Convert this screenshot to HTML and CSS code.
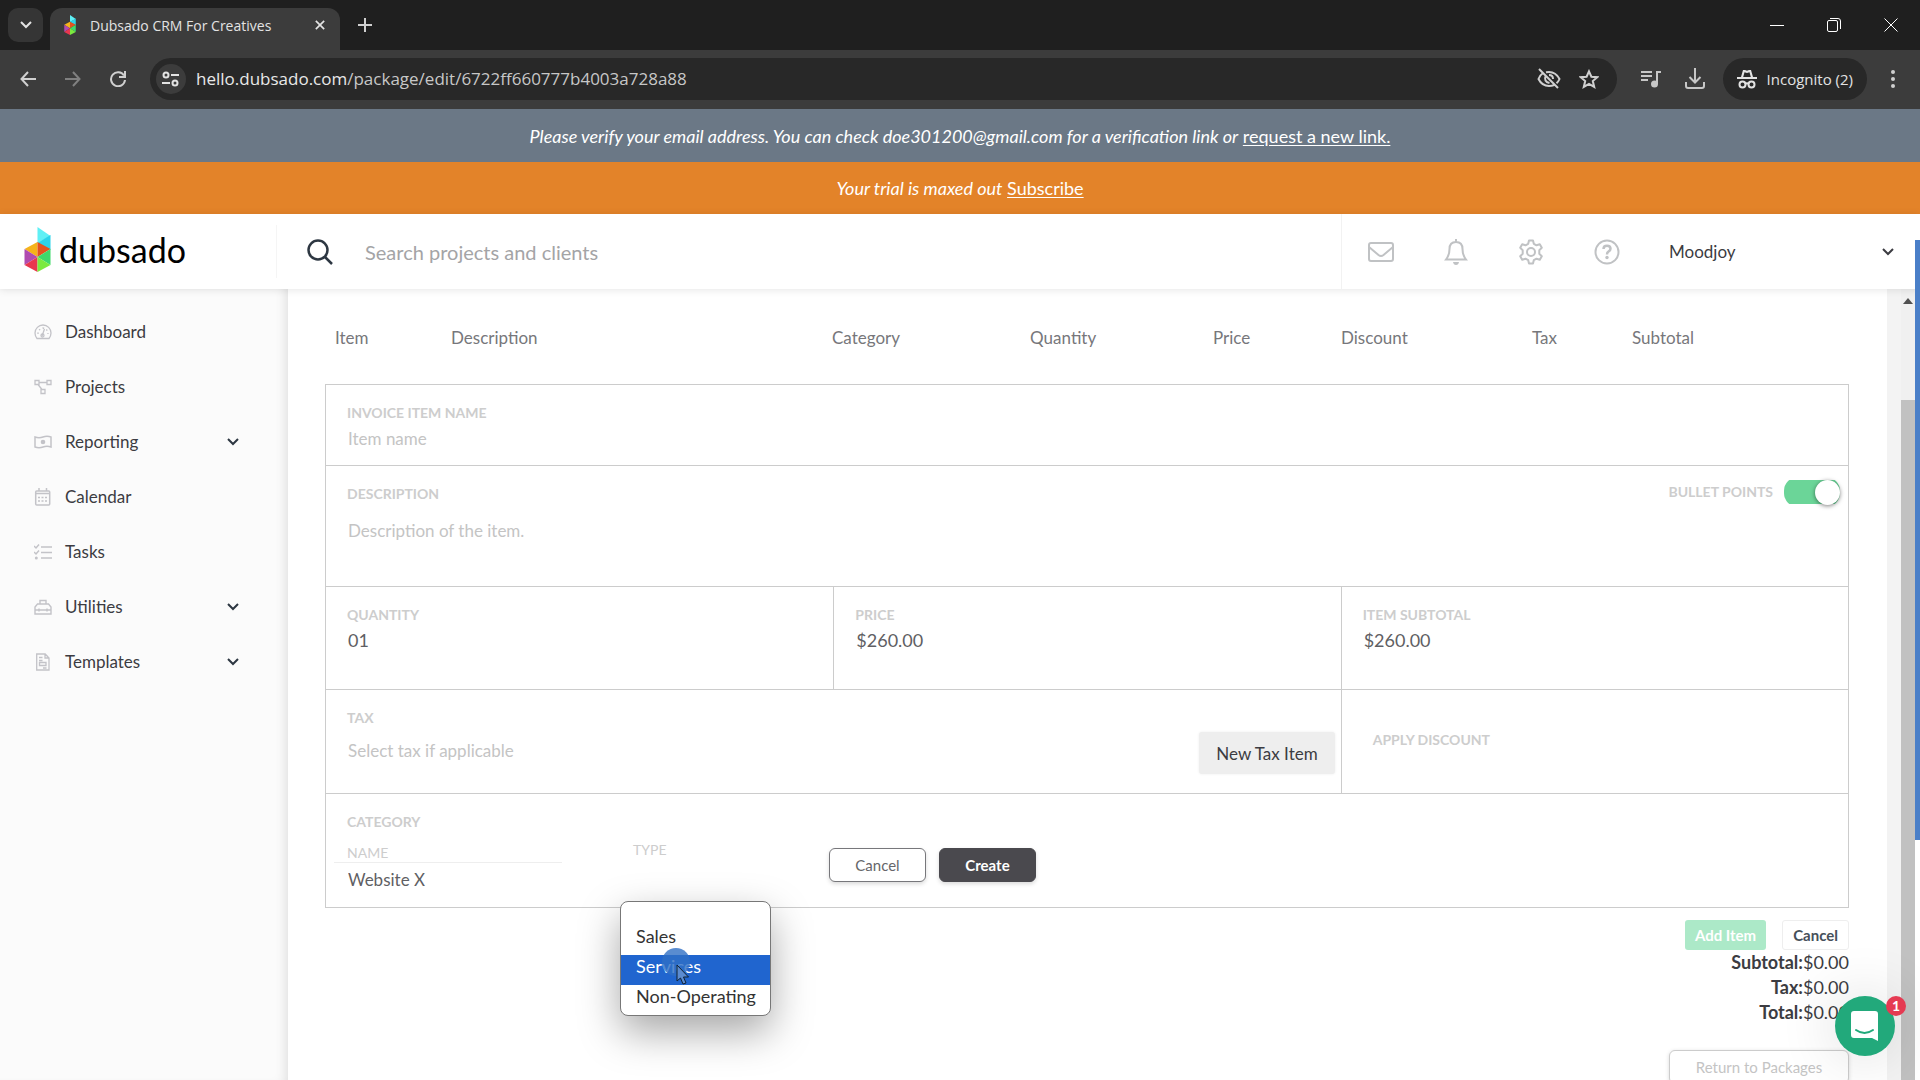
FILE: index.html
```html
<!DOCTYPE html>
<html lang="en">
<head>
<meta charset="utf-8">
<title>Dubsado CRM For Creatives</title>
<link rel="stylesheet" href="styles.css">
</head>
<body>
<svg class="defs" width="0" height="0">
<symbol id="cube" viewBox="0 0 26 45">
<path fill="#5ff0f5" d="M13 0v16l13-7z"/><path fill="#2bd3ea" d="M26 8v15l-13-7z"/>
<path fill="#f5b31b" d="M0 22l13-7v15z"/><path fill="#e4521f" d="M13 15l13 7-13 8z"/>
<path fill="#b04bb0" d="M0 22l13 8-13 8z"/><path fill="#e8374f" d="M0 38l13-8v15z"/>
<path fill="#3ed96a" d="M26 22v16l-13-8z"/><path fill="#7bea3f" d="M13 30l13 8-13 7z"/>
</symbol>
<symbol id="chev" viewBox="0 0 12 12"><path fill="none" stroke="currentColor" stroke-width="2" d="M1 3l5 5 5-5"/></symbol>
</svg>

<div class="tabs">
<button class="tab-search" aria-label="Search tabs"><svg width="12" height="12"><use href="#chev"/></svg></button>
<div class="tab">
<svg width="12" height="20"><use href="#cube"/></svg>
<span class="tab-title">Dubsado CRM For Creatives</span>
<button class="plain" aria-label="Close tab"><svg width="10" height="10" viewBox="0 0 12 12"><path fill="none" stroke="#e3e3e3" stroke-width="2" d="M1 1l10 10M11 1L1 11"/></svg></button>
</div>
<button class="plain new-tab" aria-label="New tab"><svg width="14" height="14" viewBox="0 0 14 14"><path fill="none" stroke="#d0d0d0" stroke-width="2" d="M7 0v14M0 7h14"/></svg></button>
<div class="window-buttons">
<button class="plain" aria-label="Minimize"><svg width="14" height="14" viewBox="0 0 14 14"><path stroke="#fff" d="M0 7.500h14"/></svg></button>
<button class="plain" aria-label="Restore"><svg width="14" height="14" viewBox="0 0 14 14"><rect x=".5" y="2.500" width="10" height="11" rx="1.500" fill="none" stroke="#fff"/><path fill="none" stroke="#fff" d="M3 .5h8q2.500 0 2.500 2.500v8"/></svg></button>
<button class="plain" aria-label="Close"><svg width="14" height="14" viewBox="0 0 14 14"><path stroke="#fff" d="M.5.5l13 13M13.500.5l-13 13"/></svg></button>
</div>
</div>

<div class="toolbar">
<div class="history">
<button class="plain" aria-label="Back"><svg width="16" height="16" viewBox="0 0 16 16"><path fill="none" stroke="#d0d0d0" stroke-width="2" d="M16 8H1.500M8 1L1.500 8 8 15"/></svg></button>
<button class="plain" aria-label="Forward"><svg width="16" height="16" viewBox="0 0 16 16"><path fill="none" stroke="#808080" stroke-width="2" d="M0 8h14.500M8 1l6.500 7L8 15"/></svg></button>
<button class="plain" aria-label="Reload"><svg width="16" height="16" viewBox="0 0 16 16"><path fill="none" stroke="#d0d0d0" stroke-width="2" d="M14 4.500A7 7 0 1 0 15 9M15 0v6H9"/></svg></button>
</div>
<div class="address">
<span class="site-info"><svg width="18" height="16" viewBox="0 0 18 16"><g fill="none" stroke="#e3e3e3" stroke-width="2"><circle cx="4" cy="4" r="2.500"/><path d="M9 4h8M0 12h8"/><circle cx="13" cy="12" r="2.500"/></g></svg></span>
<span class="url"><span class="host">hello.dubsado.com</span>/package/edit/6722ff660777b4003a728a88</span>
<svg width="24" height="24" viewBox="0 0 24 24"><g fill="none" stroke="#d0d0d0" stroke-width="2"><path d="M2 2l19 19M6 6Q3 8 1.500 12 5 19 12 19q3 0 5-1M9 5.300Q18 3.500 22.500 12q-1 2.500-3 4.200M8.500 9.500q-1 2 0 4t4 2.500M12 8q4 0 4 4"/></g></svg>
<svg width="20" height="20" viewBox="0 0 20 20"><path fill="none" stroke="#d0d0d0" stroke-width="2" d="M10 2.300l2.400 5.400 5.900.5-4.500 3.900 1.400 5.800-5.200-3.100-5.200 3.100 1.400-5.800-4.500-3.900 5.900-.5z"/></svg>
</div>
<svg width="20" height="18" viewBox="0 0 20 18"><path fill="none" stroke="#c7c7c7" stroke-width="2" d="M0 2h11M0 6h11M0 10h7M16 14V2h4"/><circle cx="13.500" cy="14" r="3.500" fill="#c7c7c7"/></svg>
<svg width="20" height="22" viewBox="0 0 20 22"><path fill="none" stroke="#c7c7c7" stroke-width="2" d="M10 0v14M4.500 9l5.500 5.500L15.500 9M1 14v4q0 2 2 2h14q2 0 2-2v-4"/></svg>
<div class="incognito"><svg width="20" height="20" viewBox="0 0 20 20"><path fill="#e3e3e3" fill-rule="evenodd" d="M4 8L6 1h2l2 .8L12 1h2l2 7h4v2H0V8zm2.200 0h7.600l-1.300-4.800L10 4l-2.500-.8z"/><g fill="none" stroke="#e3e3e3" stroke-width="2"><circle cx="5.500" cy="15.500" r="3"/><circle cx="14.500" cy="15.500" r="3"/><path d="M8 15q2-1.500 4 0"/></g></svg>Incognito (2)</div>
<button class="plain" aria-label="Menu"><svg width="4" height="18" viewBox="0 0 4 18"><g fill="#d0d0d0"><circle cx="2" cy="2" r="2"/><circle cx="2" cy="9" r="2"/><circle cx="2" cy="16" r="2"/></g></svg></button>
</div>

<div class="notice verify"><em>Please verify your email address. You can check doe301200@gmail.com for a verification link or</em>&nbsp;<a href="#">request a new link.</a></div>
<div class="notice trial"><em>Your trial is maxed out</em>&nbsp;<a href="#">Subscribe</a></div>

<header class="top">
<a class="brand" href="#"><svg width="27" height="45"><use href="#cube"/></svg>dubsado</a>
<form class="search">
<svg width="26" height="26" viewBox="0 0 26 26"><g fill="none" stroke="#2d3742" stroke-width="2.500"><circle cx="11" cy="11" r="9.500"/><path d="M17.500 17.500L25 25"/></g></svg>
<input type="text" aria-label="Search" placeholder="Search projects and clients">
</form>
<div class="top-icons">
<svg width="26" height="20" viewBox="0 0 26 20"><g fill="none" stroke="#c0c2c4" stroke-width="2"><rect x="1" y="1" width="24" height="18" rx="2"/><path d="M1 5l9.500 8q2.500 2 5 0L25 5"/></g></svg>
<svg width="24" height="26" viewBox="0 0 24 26"><path fill="none" stroke="#c0c2c4" stroke-width="2" d="M12 0v3M2 20.500h20Q18.500 16 18.500 10 18.500 3 12 3T5.500 10Q5.500 16 2 20.500z"/><path fill="#c0c2c4" d="M9 23h6q-.5 3-3 3t-3-3z"/></svg>
<svg width="26" height="26" viewBox="0 0 26 26"><g fill="none" stroke="#c0c2c4" stroke-width="2"><circle cx="13" cy="13" r="4"/><path stroke-linejoin="round" d="M11 1.500h4l.8 3.300 2.700 1.500 3.300-1 2 3.500-2.500 2.400v3.600l2.500 2.400-2 3.500-3.300-1-2.700 1.500-.8 3.300h-4l-.8-3.300-2.700-1.500-3.300 1-2-3.500 2.500-2.400v-3.600L2.200 8.800l2-3.500 3.300 1 2.700-1.500z"/></g></svg>
<svg width="26" height="26" viewBox="0 0 26 26"><g fill="none" stroke="#c0c2c4" stroke-width="2"><circle cx="13" cy="13" r="11.500"/><path stroke-width="2.500" d="M9.500 10q0-3.200 3.500-3.200t3.500 3q0 1.600-1.800 2.600T13 15.500"/></g><circle cx="13" cy="18.500" r="1.700" fill="#c0c2c4"/></svg>
</div>
<button class="plain account">Moodjoy<svg width="12" height="12"><use href="#chev"/></svg></button>
</header>

<div class="page">
<nav class="side">
<a href="#"><svg width="18" height="18" viewBox="0 0 18 18"><g fill="none" stroke="#c3c3c8" stroke-width="1.300"><path d="M3 15.500Q1 13 1 10a8 8 0 0 1 16 0q0 3-2 5.500z"/><path d="M8 13l2.500-7"/><circle cx="8.500" cy="12.500" r="1.500"/><path stroke-dasharray="1.500 2.500" d="M4 11q0-5 5-6 5 1 5 6"/></g></svg>Dashboard</a>
<a href="#"><svg width="18" height="18" viewBox="0 0 18 18"><g fill="none" stroke="#c3c3c8" stroke-width="1.300"><path d="M1 2.500h4v4H1zM13 2.500h4v4h-4zM7 11.500h4v4H7zM5 4.500h8M4 6.500l4 5"/></g></svg>Projects</a>
<a href="#"><svg width="18" height="18" viewBox="0 0 18 18"><path fill="none" stroke="#c3c3c8" stroke-width="1.500" d="M1 4q4 1.500 8 0t8 0v10q-4-1.500-8 0t-8 0z"/><circle cx="9" cy="9" r="2.300" fill="#c3c3c8"/></svg>Reporting<svg class="more" width="12" height="12"><use href="#chev"/></svg></a>
<a href="#"><svg width="18" height="18" viewBox="0 0 18 18"><g fill="none" stroke="#c3c3c8" stroke-width="1.500"><rect x="1.700" y="3" width="14" height="14" rx="1"/><path d="M5 0v3M12.500 0v3M2 5.500h14"/><path stroke-dasharray="2 1.500" d="M4 9.500h10M4 13h10"/></g></svg>Calendar</a>
<a href="#"><svg width="18" height="18" viewBox="0 0 18 18"><path fill="none" stroke="#c3c3c8" stroke-width="1.500" d="M7 4h11M7 9.500h11M7 15h11M0 3l2 2 3-3.500M0 9l2 2 3-3.500"/><circle cx="2.300" cy="15" r="1.500" fill="#c3c3c8"/></svg>Tasks</a>
<a href="#"><svg width="18" height="18" viewBox="0 0 18 18"><path fill="none" stroke="#c3c3c8" stroke-width="1.400" d="M1 16V9l2.500-3h11L17 9v7zM6 6V2.500h6V6M1 12h16M5 10.500v3M13 10.500v3"/></svg>Utilities<svg class="more" width="12" height="12"><use href="#chev"/></svg></a>
<a href="#"><svg width="18" height="18" viewBox="0 0 18 18"><path fill="none" stroke="#c3c3c8" stroke-width="1.300" d="M2.700 1h8.500l3.800 4v12H2.700zM11 1v4h4M5 4.500h3.500M5 7.500h3.500M5.500 9.500h6.500v3H5.500zM9 15h3.500"/></svg>Templates<svg class="more" width="12" height="12"><use href="#chev"/></svg></a>
</nav>

<main class="main">
<table class="items">
<tr><th class="c-item">Item</th><th class="c-desc">Description</th><th class="c-cat">Category</th><th class="c-qty">Quantity</th><th class="c-price">Price</th><th class="c-disc">Discount</th><th class="c-tax">Tax</th><th>Subtotal</th></tr>
</table>

<form class="item-form">
<div class="row name-row"><div class="cell wide">
<label for="name">Invoice item name</label><input id="name" type="text" placeholder="Item name">
</div></div>
<div class="row desc-row"><div class="cell desc">
<label for="desc">Description</label><textarea id="desc" placeholder="Description of the item."></textarea>
</div>
<div class="bullets"><label for="bullets">Bullet points</label><input id="bullets" class="toggle" type="checkbox" checked></div>
</div>
<div class="row qty-row">
<div class="cell"><label for="qty">Quantity</label><input id="qty" type="text" value="01"></div>
<div class="cell"><label for="price">Price</label><input id="price" type="text" value="$260.00"></div>
<div class="cell"><label for="sub">Item subtotal</label><input id="sub" type="text" value="$260.00"></div>
</div>
<div class="row tax-row">
<div class="cell tax"><div class="grow"><label for="tax">Tax</label><input id="tax" type="text" placeholder="Select tax if applicable"></div><button type="button" class="new-tax">New Tax Item</button></div>
<div class="cell apply"><span class="label">Apply discount</span></div>
</div>
<div class="row cat-row">
<div class="cell wide">
<span class="label">Category</span>
<div class="cat-fields">
<div class="cat-name"><label for="cat">Name</label><input id="cat" type="text" value="Website X"></div>
<div class="cat-type"><label for="type">Type</label>
<select id="type" size="4"><option></option><option>Sales</option><option selected>Services</option><option>Non-Operating</option></select>
</div>
<button type="button" class="btn">Cancel</button>
<button type="button" class="btn dark">Create</button>
</div>
</div>
</div>
</form>

<div class="form-actions"><button class="add">Add Item</button><button class="cancel">Cancel</button></div>
<div class="totals">
<div><b>Subtotal:</b>$0.00</div>
<div><b>Tax:</b>$0.00</div>
<div><b>Total:</b>$0.00</div>
</div>
<button class="return">Return to Packages</button>
</main>
<div class="gutter"></div>
<div class="scroll"><svg width="10" height="6" viewBox="0 0 10 6"><path fill="#505050" d="M5 0l5 6H0z"/></svg><div class="thumb"></div></div>
</div>

<div class="edge"></div>
<svg class="pointer" width="30" height="44" viewBox="0 0 30 44"><circle cx="14" cy="14" r="14" fill="#2f6fc4" fill-opacity=".8"/><path fill="#5b8bd0" stroke="#123" d="M15 17v16l3.500-3 2.500 6 3-1-2.500-6h5z"/></svg>
<button class="chat" aria-label="Open chat"><svg width="28" height="30" viewBox="0 0 28 30"><path fill="#fff" d="M3 0h21q3 0 3 3v27l-6-3H3q-3 0-3-3V3q0-3 3-3z"/><path fill="none" stroke="#22a97b" stroke-width="2" stroke-linecap="round" d="M5 19q8.500 6 17 0"/></svg><span class="badge">1</span></button>
</body>
</html>
```
FILE: styles.css
```css
* { box-sizing: border-box; }

body {
margin: 0;
height: 100vh;
display: flex;
flex-direction: column;
overflow: hidden;
position: relative;
font-family: Lato, "Liberation Sans", sans-serif;
font-size: 17px;
color: #3c3c42;
background: #fff;
}

.defs { position: absolute; }
svg { flex: none; display: block; }
input, textarea, select, button { font: inherit; color: inherit; margin: 0; }
label { display: block; }

.plain {
border: 0;
padding: 0;
background: none;
}

/* Browser */

.tabs {
height: 50px;
flex: none;
display: flex;
align-items: center;
background: #1f1f1f;
padding: 0 22px 0 8px;
font-family: "Open Sans", sans-serif;
font-size: 14px;
color: #e3e3e3;
}

.tab-search {
width: 35px;
height: 34px;
border: 0;
border-radius: 10px;
background: #353535;
display: flex;
align-items: center;
justify-content: center;
margin-right: 7px;
}

.tab {
width: 290px;
height: 42px;
align-self: flex-end;
border-radius: 12px 12px 0 0;
background: #3c3c3c;
display: flex;
align-items: center;
padding: 0 15px 8px 14px;
}
.tab-title { flex: 1; margin-left: 14px; }
.new-tab { margin-left: 18px; }
.window-buttons { display: flex; gap: 43px; margin-left: auto; }

.toolbar {
height: 59px;
flex: none;
display: flex;
align-items: center;
gap: 24px;
padding: 0 25px 2px 20px;
background: #3c3c3c;
font-family: "Open Sans", sans-serif;
color: #e3e3e3;
}
.history { display: flex; gap: 29px; }
.address {
flex: 1;
height: 42px;
border-radius: 21px;
background: #282828;
display: flex;
align-items: center;
gap: 18px;
padding: 0 18px 0 6px;
}
.site-info {
width: 30px;
height: 30px;
border-radius: 15px;
background: #3c3c3c;
display: flex;
align-items: center;
justify-content: center;
margin-right: -8px;
}
.url { flex: 1; color: #c7c7c7; }
.host { color: #e8e8e8; }
.incognito {
height: 42px;
border-radius: 21px;
background: #282828;
display: flex;
align-items: center;
gap: 10px;
padding: 0 14px;
margin-left: -6px;
font-size: 15px;
}

/* Notices */

.notice {
height: 53px;
flex: none;
display: flex;
align-items: center;
justify-content: center;
font-size: 18px;
color: #fff;
background: #6b7886;
}
.notice a { color: #fff; text-underline-offset: 2px; }
.trial { height: 52px; background: #e38329; }

/* Header */

.top {
height: 75px;
flex: none;
display: flex;
align-items: center;
background: #fff;
box-shadow: 0 1px 8px rgba(0,0,0,.1);
z-index: 2;
}
.brand {
width: 277px;
height: 53px;
padding: 0 0 4px 24px;
border-right: 1px solid #f5f5f5;
display: flex;
align-items: center;
gap: 8px;
color: #000;
font-size: 34px;
text-decoration: none;
}
.search {
flex: 1;
display: flex;
align-items: center;
gap: 30px;
padding-left: 30px;
}
.search input {
flex: 1;
border: 0;
padding: 0 2px;
outline: 0;
font-size: 20px;
}
.search input::placeholder { color: #a4a4a6; opacity: 1; }
.top-icons {
height: 75px;
border-left: 1px solid #f2f2f2;
display: flex;
align-items: center;
gap: 50px;
padding: 0 49px 0 26px;
}
.account {
width: 251px;
display: flex;
align-items: center;
justify-content: space-between;
padding-right: 26px;
}

/* Side menu */

.page { flex: 1; display: flex; min-height: 0; }

.side {
width: 288px;
flex: none;
padding-top: 15px;
background: #fbfbfb;
box-shadow: inset -10px 0 12px -8px rgba(0,0,0,.12);
}
.side a {
height: 55px;
display: flex;
align-items: center;
gap: 13px;
padding: 0 49px 0 34px;
color: #3c3c42;
text-decoration: none;
}
.side .more { margin-left: auto; color: #2d3742; }

/* Form */

.main {
flex: 1;
padding: 18px 38px 0 37px;
overflow: hidden;
}

.items {
width: 100%;
height: 60px;
table-layout: fixed;
border-collapse: collapse;
margin-bottom: 17px;
}
.items th {
padding: 0 0 0 10px;
text-align: left;
font-weight: normal;
color: #77777b;
}
.c-item { width: 116px; }
.c-desc { width: 25%; }
.c-cat { width: 13%; }
.c-qty { width: 12%; }
.c-price { width: 128px; }
.c-disc { width: 191px; }
.c-tax { width: 100px; }

.item-form { border: 1px solid #ccc; }
.row { display: grid; grid-template-columns: repeat(3, 1fr); }
.row + .row { border-top: 1px solid #ccc; }
.cell { padding: 19px 22px 0 21px; }
.cell + .cell { border-left: 1px solid #ccc; }
.wide { grid-column: span 3; }

.item-form label, .label {
display: block;
font-size: 14px;
line-height: 18px;
font-weight: bold;
text-transform: uppercase;
color: #cdcdcd;
}
.item-form input[type=text], .item-form textarea {
display: block;
width: 100%;
height: 32px;
border: 0;
padding: 0 1px;
outline: 0;
resize: none;
background: none;
color: #5f5f64;
}
.item-form input::placeholder, .item-form textarea::placeholder { color: #c4c4c4; opacity: 1; }

.name-row { height: 80px; }
.desc-row { height: 121px; }
.desc { grid-column: span 2; }
.item-form textarea { height: 60px; margin-top: 17px; }
.bullets {
display: flex;
align-items: center;
align-self: start;
justify-content: flex-end;
gap: 11px;
padding: 11px 8px 0 0;
}
.toggle {
appearance: none;
width: 56px;
height: 30px;
display: flex;
align-items: center;
justify-content: flex-end;
border-radius: 14px;
background: linear-gradient(#6bd598, #6bd598) center / 100% 24px no-repeat;
}
.toggle::before {
content: "";
width: 25px;
height: 25px;
border-radius: 50%;
background: #fff;
box-shadow: 0 1px 4px rgba(0,0,0,.5);
}

.qty-row { height: 103px; }
.item-form .qty-row input { font-size: 18px; }
.tax-row { height: 104px; }
.tax { grid-column: span 2; display: flex; padding-right: 6px; }
.grow { flex: 1; }
.grow label { margin-bottom: 7px; }
.new-tax {
height: 42px;
margin-top: 23px;
border: 0;
border-radius: 3px;
padding: 0 17px;
background: #eee;
box-shadow: 0 0 3px #eee;
}
.apply { padding: 41px 31px 0; }

.cat-row { height: 114px; }
.cat-fields { display: flex; align-items: flex-start; }
.cat-fields label { font-weight: normal; }
.cat-name { width: 228px; margin: 13px 58px 0 -13px; }
.cat-name label { padding-left: 13px; border-bottom: 1px solid #eee; }
.item-form .cat-name input { padding-left: 14px; }
.cat-type { width: 209px; position: relative; padding: 10px 0 0 13px; }
.cat-type select {
position: absolute;
left: 0;
top: 70px;
width: 151px;
height: 115px;
border: 1px solid #777;
border-radius: 8px;
padding: 0;
outline: 0;
overflow: hidden;
background: #fff;
color: #333;
font-size: 18px;
box-shadow: 0 16px 40px rgba(0,0,0,.35);
z-index: 3;
}
.cat-type option { height: 30px; line-height: 30px; padding: 0 15px; min-height: 0; }
.cat-type option:first-child { height: 23px; }
.cat-type option:checked { background: #2065cf linear-gradient(#2065cf, #2065cf); color: #fff; }
.btn {
width: 97px;
height: 34px;
margin: 17px 13px 0 0;
border: 1px solid #77777b;
border-radius: 6px;
background: #fff;
color: #66666a;
font-size: 15px;
box-shadow: 0 2px 4px rgba(0,0,0,.15);
}
.dark { background: #4a494e; border-color: #4a494e; color: #fff; font-weight: bold; }

.form-actions {
display: flex;
justify-content: flex-end;
gap: 16px;
margin-top: 12px;
font-size: 15px;
font-weight: bold;
}
.add, .cancel { height: 30px; border-radius: 3px; padding: 0 10px; }
.add { border: 0; background: #ace9c8; color: #fff; }
.cancel { border: 1px solid #eee; background: #fff; color: #46505a; }
.totals { text-align: right; font-size: 18px; line-height: 25px; }
.return {
display: block;
width: 180px;
height: 34px;
margin: 25px 0 0 auto;
border: 1px solid #ccc;
border-radius: 6px;
background: #fff;
color: #c4c4c4;
font-size: 15px;
box-shadow: 0 1px 4px rgba(0,0,0,.15);
}

/* Scroll bar */

.gutter { width: 14px; background: #f3f3f3; }
.scroll {
width: 14px;
margin-right: 5px;
padding: 9px 2px 0;
background: #f0f0f0;
display: flex;
flex-direction: column;
}
.thumb { flex: 1; margin: 96px -2px 0; background: #c1c1c1; }

/* Overlays */

.edge {
position: absolute;
right: 0;
top: 240px;
width: 5px;
height: 600px;
background: #4a7fc8;
z-index: 3;
}

.pointer { position: absolute; left: 662px; top: 948px; z-index: 4; }

.chat {
position: absolute;
right: 25px;
bottom: 24px;
width: 60px;
height: 60px;
border: 0;
border-radius: 50%;
padding: 0;
display: flex;
align-items: center;
justify-content: center;
background: #22a97b;
box-shadow: 0 0 60px rgba(0,0,0,.16);
z-index: 4;
}
.badge {
position: absolute;
right: -11px;
top: 0;
width: 20px;
height: 20px;
border-radius: 50%;
background: #e53a52;
color: #fff;
font-size: 14px;
line-height: 20px;
font-weight: bold;
}
```
